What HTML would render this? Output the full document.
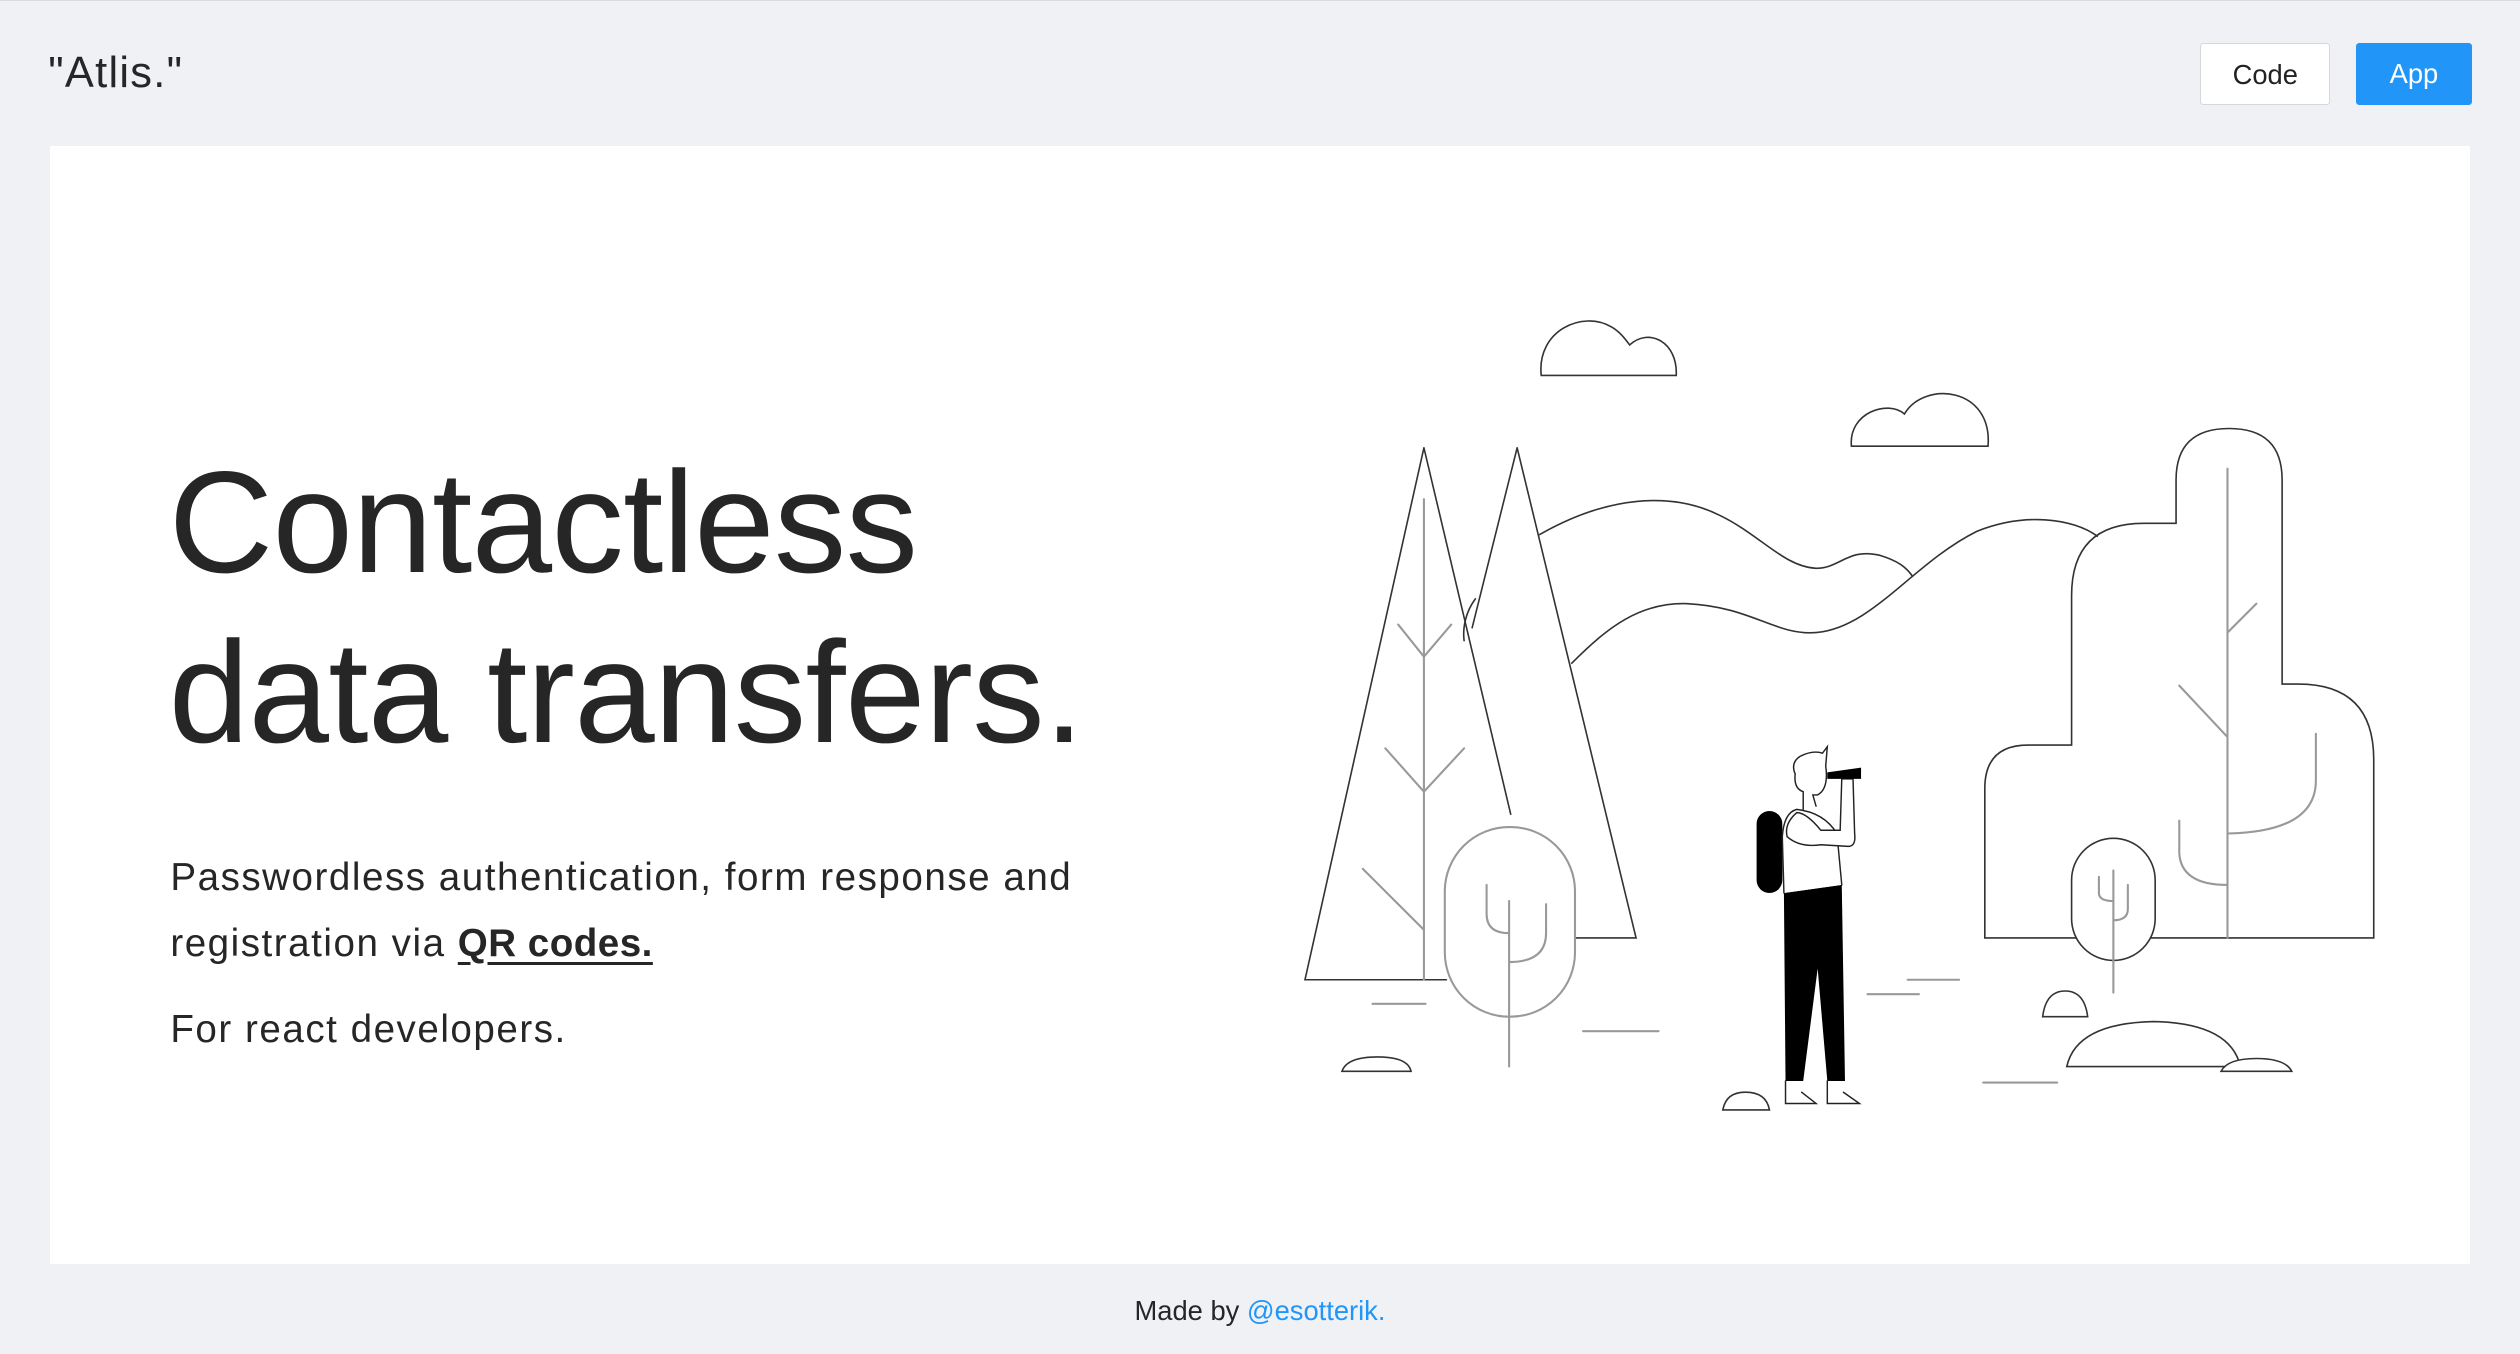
<!DOCTYPE html>
<html><head><meta charset="utf-8"><style>
html,body{margin:0;padding:0;}
body{width:2520px;height:1354px;overflow:hidden;background:#f0f1f5;}
#p{zoom:1.60714;width:1568px;height:842.5px;position:relative;font-family:"Liberation Sans",sans-serif;color:#262626;border-top:1px solid #d9dbe0;box-sizing:border-box;}
.logo{position:absolute;left:30px;top:30px;font-size:27px;letter-spacing:0.8px;}
.btn{position:absolute;top:26px;height:39px;line-height:39px;font-size:17px;text-align:center;border-radius:2px;}
.code{left:1369px;width:81px;background:#fff;border:1px solid #d6d7db;box-sizing:border-box;color:#222;}
.app{left:1466px;width:72px;background:#2196f8;color:#fff;}
.card{position:absolute;left:31px;top:90px;width:1506px;height:696px;background:#fff;}
h1{position:absolute;left:105px;top:271px;margin:0;font-size:90px;font-weight:normal;line-height:106px;letter-spacing:-0.4px;color:#262626;}
.p{position:absolute;left:106px;font-size:24px;line-height:41px;letter-spacing:0.95px;}
.p a{color:#262626;font-weight:bold;text-decoration:underline;text-underline-offset:4px;letter-spacing:0.3px;}
.foot{position:absolute;left:0;width:1568px;top:805px;text-align:center;font-size:17px;}
.foot span{color:#2196f8;}
svg{position:absolute;left:0;top:0;}
</style></head><body><div id="p">
<div class="logo">"Atlis."</div>
<div class="btn code">Code</div>
<div class="btn app">App</div>
<div class="card"></div>
<h1>Contactless<br>data transfers.</h1>
<div class="p" style="top:525px">Passwordless authentication, form response and<br>registration via <a>QR codes.</a></div>
<div class="p" style="top:620px">For react developers.</div>
<div class="foot">Made by <span>@esotterik.</span></div>
<svg width="1568" height="842" viewBox="0 0 1568 842" fill="none" stroke-linecap="round">
<g stroke="#333" stroke-width="1">
<path d="M959 233 C956 205 985 192 1003 203 C1008 206 1011 210 1014 214 C1026 203 1044 212 1043 233 Z"/>
<path d="M1152 277 C1150 256 1175 248 1185 257 C1197 236 1240 240 1237 277 Z"/>
<path d="M958 332 C1000 308 1040 305 1070 320 C1095 332 1110 352 1130 353 C1145 353 1150 340 1170 345 C1180 348 1186 352 1190 358"/>
<path d="M978 412 C1000 390 1020 374 1050 375 C1090 377 1105 395 1130 393 C1165 390 1190 350 1230 330 C1260 318 1290 322 1305 333"/>
<path d="M918 372 C912 380 910 390 911 398"/>
<path d="M944 278 L1018 583 L975 583 M944 278 L916 390"/>
<path d="M886 278 L812 609 L900 609 M886 278 L940 506"/>
<path d="M1235 583 L1235 490 Q1235 463 1262 463 L1289 463 L1289 370 Q1289 325 1334 325 L1354 325 L1354 298 Q1354 266 1387 266 Q1420 266 1420 298 L1420 425 L1430 425 Q1477 425 1477 472 L1477 583 Z"/>
<rect x="1289" y="521" width="52" height="76" rx="26" fill="#fff"/>
<path d="M835 666 Q838 657 857 657 Q876 657 878 666 Z"/>
<path d="M1072 690 Q1074 679 1086 679 Q1099 679 1101 690 Z"/>
<path d="M1271 632 Q1273 616 1285 616 Q1297 616 1299 632 Z"/>
<path d="M1286 663 Q1292 636 1340 635 Q1388 636 1394 663 Z"/>
<path d="M1382 666 Q1386 658 1404 658 Q1422 658 1426 666 Z" fill="#fff"/>
</g>
<g stroke="#999" stroke-width="1.3">
<path d="M886 310 L886 609 M870 388 L886 408 L903 388 M862 465 L886 492 L911 465 M848 540 L886 578"/>
<rect x="899" y="514" width="81" height="118" rx="40" fill="#fff"/>
<path d="M939 560 L939 663 M925 550 L925 568 Q925 580 939 580 M962 562 L962 580 Q962 598 939 598"/>
<path d="M1386 291 L1386 583 M1386 393 L1404 375 M1356 426 L1386 458 M1441 456 L1441 485 Q1441 517 1386 518 M1356 510 L1356 530 Q1357 550 1386 550"/>
<path d="M1315 541 L1315 617 M1306 545 L1306 555 Q1306 560 1315 560 M1324 550 L1324 565 Q1324 572 1315 572"/>
<path d="M854 624 L887 624 M985 641 L1032 641 M1162 618 L1194 618 M1187 609 L1219 609 M1234 673 L1280 673"/>
</g>
<rect x="1093" y="504" width="16" height="51" rx="8" fill="#000"/>
<path d="M1110 555 L1146 550 L1148 672 L1137 672 L1131 602 L1122 672 L1111 672 Z" fill="#000"/>
<g stroke="#222" stroke-width="0.9" fill="#fff">
<path d="M1110 555 L1109 520 Q1110 505 1118 503 Q1135 505 1143 518 L1146 550"/>
<path d="M1118 505 Q1110 512 1112 520 Q1120 527 1133 525 L1150 526 Q1155 526 1154 518 L1153 484 L1146 484 L1145 516 L1133 516 Q1124 505 1118 505"/>
<path d="M1122 503 L1122 492 Q1116 490 1117 481 Q1114 474 1120 470 Q1128 466 1134 468 L1137 464 L1136 476 Q1138 490 1131 494 L1128 494 L1130 501"/>
<path d="M1111 672 L1111 686 L1130 686 L1121 679 M1137 672 L1137 686 L1157 686 L1147 679"/>
</g>
<path d="M1137 480 L1158 477 L1158 484 L1137 484 Z" fill="#000"/>
</svg>
</div></body></html>
